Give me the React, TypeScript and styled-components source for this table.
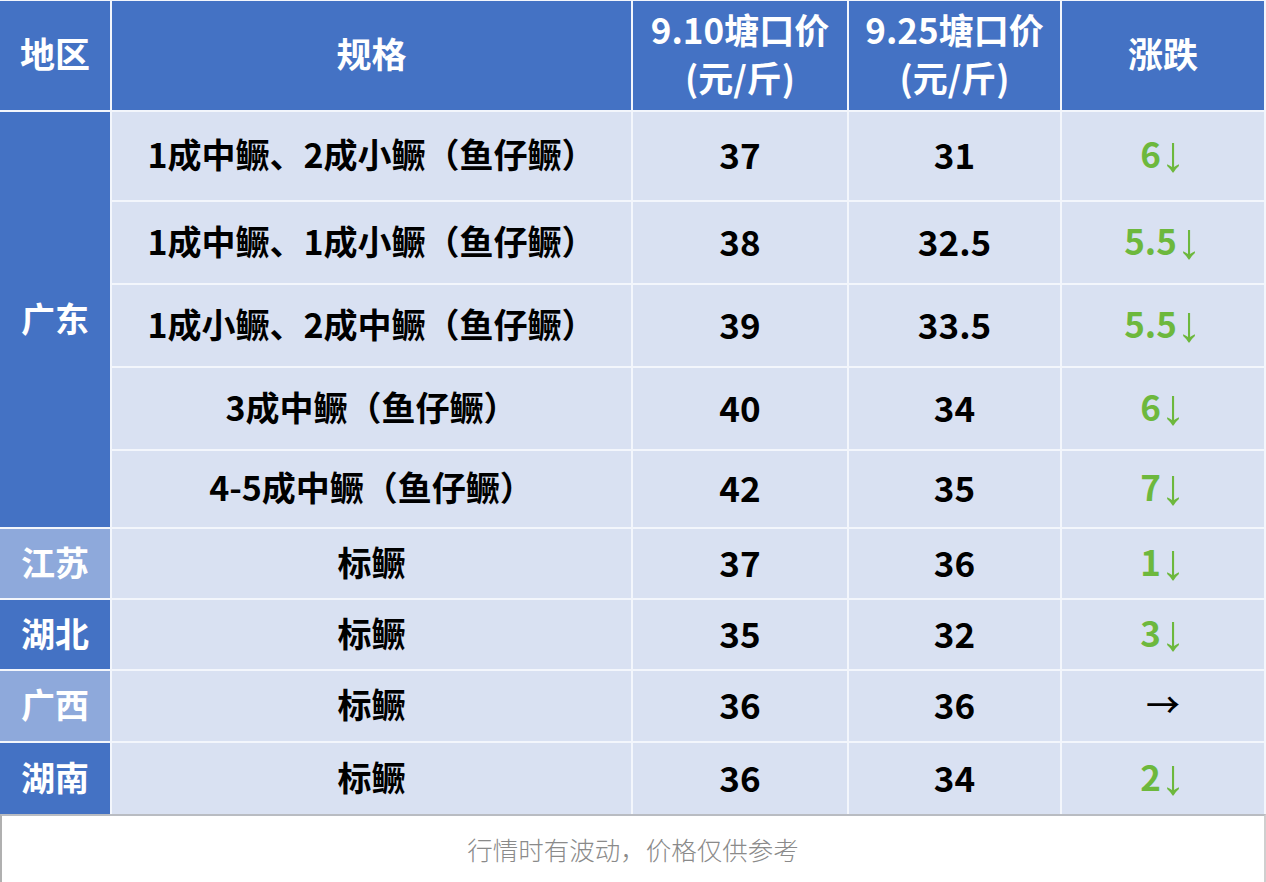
import React from "react";
import styled, { createGlobalStyle } from "styled-components";

const Global = createGlobalStyle`
  html, body { margin: 0; padding: 0; background: #ffffff; }
  body { font-family: "Noto Sans CJK SC", "Noto Sans", sans-serif; }
`;

const Page = styled.div`
  width: 1266px;
  height: 882px;
  display: flex;
  flex-direction: column;
  background: #ffffff;
`;

const Table = styled.div`
  display: grid;
  grid-template-columns: 110px 519px 214px 211px 202px;
  grid-template-rows: 109px 88px 81px 81px 81px 76px 69px 69px 70px 71px;
  gap: 2px;
  padding: 1px 2px 0 0;
  background: #f3f6fc;
`;

const Cell = styled.div<{ $bg?: string; $span?: number }>`
  display: flex;
  align-items: center;
  justify-content: center;
  text-align: center;
  padding-bottom: 5px;
  background: ${(p) => p.$bg ?? "#D9E1F2"};
  grid-row: ${(p) => (p.$span ? `span ${p.$span}` : "auto")};
  font-family: "Noto Sans CJK SC", sans-serif;
  font-weight: 700;
  font-size: 34px;
  color: #000;
`;

const HeadCell = styled(Cell)`
  background: #4472C4;
  color: #ffffff;
  font-size: 35px;
  line-height: 48px;
`;

const RegionCell = styled(Cell)<{ $light?: boolean }>`
  background: ${(p) => (p.$light ? "#8EA9DB" : "#4472C4")};
  color: #ffffff;
`;

const Num = styled(Cell)`
  font-size: 35px;
`;

const Change = styled(Cell)<{ $flat?: boolean }>`
  font-size: 35px;
  color: ${(p) => (p.$flat ? "#000" : "#6DB83D")};
`;

const ChangeText = styled.span`
  line-height: 50px;
`;

const Arrow = styled.span<{ $tight?: boolean }>`
  font-weight: ${(p) => (p.$tight ? 400 : 500)};
  font-family: ${(p) => (p.$tight ? `"Liberation Sans", sans-serif` : `"Noto Sans CJK SC", sans-serif`)};
  font-size: ${(p) => (p.$tight ? "50px" : "34px")};
  line-height: 50px;
  vertical-align: ${(p) => (p.$tight ? "-3px" : "baseline")};
`;

const Footer = styled.div`
  flex: 1;
  display: flex;
  align-items: center;
  justify-content: center;
  border-top: 2px solid #b9bcc2;
  border-left: 2px solid #b0b0b0;
  border-right: 2px solid #cfcfcf;
  font-family: "Noto Sans CJK SC", sans-serif;
  font-weight: 300;
  font-size: 25.5px;
  color: #8a8a8a;
  padding-bottom: 2px;
`;

type Row = { spec: string; a: string; b: string; change: string; flat?: boolean };

const gd: Row[] = [
  { spec: "1成中鳜、2成小鳜（鱼仔鳜）", a: "37", b: "31", change: "6" },
  { spec: "1成中鳜、1成小鳜（鱼仔鳜）", a: "38", b: "32.5", change: "5.5" },
  { spec: "1成小鳜、2成中鳜（鱼仔鳜）", a: "39", b: "33.5", change: "5.5" },
  { spec: "3成中鳜（鱼仔鳜）", a: "40", b: "34", change: "6" },
  { spec: "4-5成中鳜（鱼仔鳜）", a: "42", b: "35", change: "7" },
];

const others: (Row & { region: string; light: boolean })[] = [
  { region: "江苏", light: true, spec: "标鳜", a: "37", b: "36", change: "1" },
  { region: "湖北", light: false, spec: "标鳜", a: "35", b: "32", change: "3" },
  { region: "广西", light: true, spec: "标鳜", a: "36", b: "36", change: "", flat: true },
  { region: "湖南", light: false, spec: "标鳜", a: "36", b: "34", change: "2" },
];

const RowCells = ({ r }: { r: Row }) => (
  <>
    <Cell>{r.spec}</Cell>
    <Num>{r.a}</Num>
    <Num>{r.b}</Num>
    {r.flat ? (
      <Change $flat>
        <Arrow>→</Arrow>
      </Change>
    ) : (
      <Change>
        <ChangeText>
          {r.change}
          <Arrow $tight>↓</Arrow>
        </ChangeText>
      </Change>
    )}
  </>
);

export default function App() {
  return (
    <Page>
      <Global />
      <Table>
        <HeadCell>地区</HeadCell>
        <HeadCell>规格</HeadCell>
        <HeadCell>
          9.10塘口价
          <br />
          (元/斤)
        </HeadCell>
        <HeadCell>
          9.25塘口价
          <br />
          (元/斤)
        </HeadCell>
        <HeadCell>涨跌</HeadCell>
        <RegionCell $span={5}>广东</RegionCell>
        {gd.map((r, i) => (
          <RowCells key={i} r={r} />
        ))}
        {others.map((r, i) => (
          <React.Fragment key={i}>
            <RegionCell $light={r.light}>{r.region}</RegionCell>
            <RowCells r={r} />
          </React.Fragment>
        ))}
      </Table>
      <Footer>行情时有波动，价格仅供参考</Footer>
    </Page>
  );
}
